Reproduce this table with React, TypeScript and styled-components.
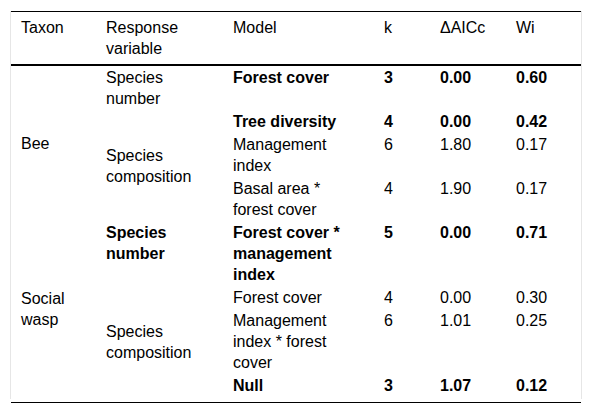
import React from 'react';
import styled, {createGlobalStyle} from 'styled-components';

type Row = {
    taxon?: {text: string, span: number};
    response?: {text: string, span: number, bold?: boolean};
    model: string;
    k: string;
    aicc: string;
    wi: string;
    bold?: boolean;
};

const rows: Row[] = [
    {taxon: {text: 'Bee', span: 4}, response: {text: 'Species number', span: 1}, model: 'Forest cover', k: '3', aicc: '0.00', wi: '0.60', bold: true},
    {response: {text: 'Species composition', span: 3}, model: 'Tree diversity', k: '4', aicc: '0.00', wi: '0.42', bold: true},
    {model: 'Management index', k: '6', aicc: '1.80', wi: '0.17'},
    {model: 'Basal area * forest cover', k: '4', aicc: '1.90', wi: '0.17'},
    {taxon: {text: 'Social wasp', span: 4}, response: {text: 'Species number', span: 1, bold: true}, model: 'Forest cover * management index', k: '5', aicc: '0.00', wi: '0.71', bold: true},
    {response: {text: 'Species composition', span: 3}, model: 'Forest cover', k: '4', aicc: '0.00', wi: '0.30'},
    {model: 'Management index * forest cover', k: '6', aicc: '1.01', wi: '0.25'},
    {model: 'Null', k: '3', aicc: '1.07', wi: '0.12', bold: true},
];

const widths = [85, 127, 151, 56, 76, 75];

const App: React.FC = () => {
    return (
        <>
            <GlobalStyle/>
            <Page>
                <Frame>
                    <Table>
                        <colgroup>
                            {widths.map((w, i) => <col key={i} style={{width: w}}/>)}
                        </colgroup>
                        <thead>
                        <tr>
                            <HeadCell>Taxon</HeadCell>
                            <HeadCell>Response variable</HeadCell>
                            <HeadCell>Model</HeadCell>
                            <HeadCell>k</HeadCell>
                            <HeadCell>ΔAICc</HeadCell>
                            <HeadCell>Wi</HeadCell>
                        </tr>
                        </thead>
                        <tbody>
                        {rows.map((row, i) => (
                            <tr key={i}>
                                {row.taxon && (
                                    <Cell rowSpan={row.taxon.span} $middle>{row.taxon.text}</Cell>
                                )}
                                {row.response && (
                                    <Cell
                                        rowSpan={row.response.span}
                                        $middle={row.response.span > 1}
                                        $bold={row.response.bold}
                                    >
                                        {row.response.text}
                                    </Cell>
                                )}
                                <Cell $bold={row.bold}>{row.model}</Cell>
                                <Cell $bold={row.bold}>{row.k}</Cell>
                                <Cell $bold={row.bold}>{row.aicc}</Cell>
                                <Cell $bold={row.bold}>{row.wi}</Cell>
                            </tr>
                        ))}
                        </tbody>
                    </Table>
                </Frame>
                <FootRule/>
            </Page>
        </>
    );
};

const GlobalStyle = createGlobalStyle`
  body {
    margin: 0;
    background: #fff;
    font-family: "Liberation Sans", Arial, sans-serif;
  }
`;

const Page = styled.div`
  width: 592px;
  height: 414px;
  padding-top: 11px;
  box-sizing: border-box;
`;

const Frame = styled.div`
  margin-left: 10px;
  width: 570px;
  border-left: 1px solid #e6e6e6;
  border-right: 1px solid #e6e6e6;
  padding-bottom: 2px;
`;

const Table = styled.table`
  width: 570px;
  table-layout: fixed;
  border-collapse: collapse;
  border-top: 1px solid #000;
  font-size: 16px;
  line-height: 21px;
  color: #000;
`;

const HeadCell = styled.th`
  text-align: left;
  vertical-align: top;
  font-weight: normal;
  padding: 5px 14px 5px 10px;
  border-bottom: 2px solid #000;
  white-space: normal;
`;

const Cell = styled.td<{ $bold?: boolean, $middle?: boolean }>`
  text-align: left;
  vertical-align: ${p => p.$middle ? 'middle' : 'top'};
  font-weight: ${p => p.$bold ? 700 : 400};
  padding: 1px 14px 1px 10px;
`;

const FootRule = styled.div`
  margin: 3px 0 0 11px;
  width: 570px;
  border-top: 1px solid #000;
`;

export default App;
